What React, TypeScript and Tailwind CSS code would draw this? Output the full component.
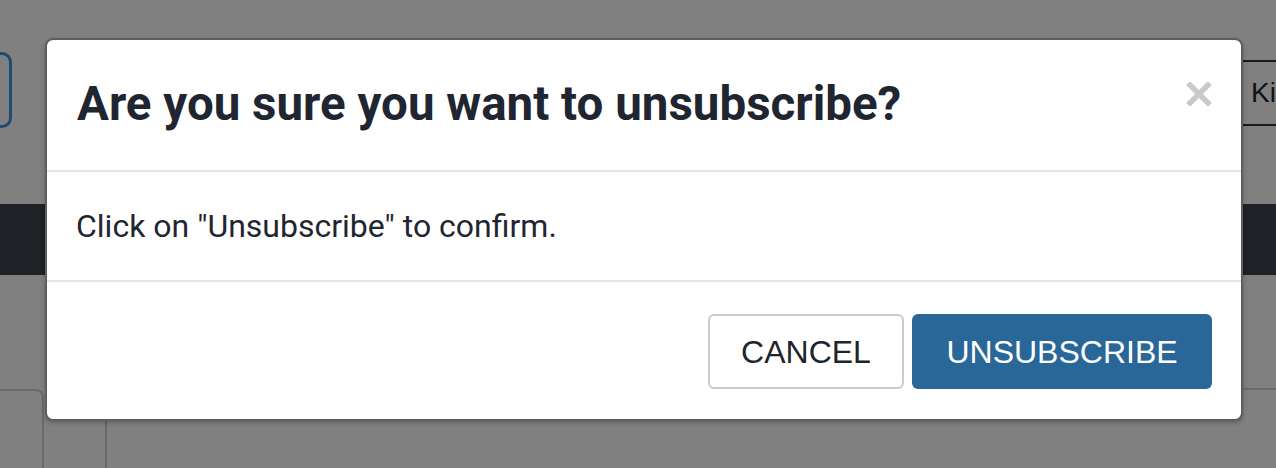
import React from "react";

function CloseIcon() {
	return (
		<svg width="26" height="24" viewBox="0 0 26 24" aria-hidden="true">
			<path
				d="M4 3 L22 21 M22 3 L4 21"
				stroke="#c9c9c9"
				strokeWidth="5.5"
				strokeLinecap="square"
				fill="none"
			/>
		</svg>
	);
}

function PageBehind() {
	return (
		<div className="flex flex-col">
			<div className="h-[204px] flex justify-between items-start">
				<div className="mt-[52px] ml-[-40px] h-[76px] w-[52px] rounded-[10px] border-[3px] border-[#1f4b70]" />
				<div className="mt-[60px] mr-[-45px] h-[66px] w-[80px] border-2 border-r-0 border-[#1a1a1a] flex items-center pl-[8px] text-[28px] text-[#111] font-['Liberation_Sans',sans-serif]">
					Ki
				</div>
			</div>
			<div className="h-[71px] bg-[#1e2125]" />
			<div className="flex items-start pt-[113px]">
				<div className="mt-[1px] h-[100px] w-[44px] rounded-tr-[8px] border-2 border-l-0 border-b-0 border-[#6a6a6a]" />
				<div className="ml-[61px] flex-1 h-[100px] border-l-2 border-t-2 border-[#6a6a6a]" />
			</div>
		</div>
	);
}

export default function App() {
	return (
		<div className="relative w-[1276px] h-[468px] overflow-hidden bg-[#808080] font-['Roboto',sans-serif]">
			<PageBehind />

			<div className="absolute left-[45px] top-[38px] w-[1198px] h-[383px] flex flex-col rounded-[8px] border-2 border-[#5e5e5e] bg-white shadow-[0_2px_4px_rgba(0,0,0,0.25)]">
				<div className="h-[132px] flex justify-between items-start px-[30px] border-b-2 border-[#e5e5e5]">
					<h4 className="mt-[36px] text-[47.5px] leading-[56px] font-bold text-[#1f2631]">
						Are you sure you want to unsubscribe?
					</h4>
					<button className="mt-[42px] mr-[-1px]" type="button">
						<CloseIcon />
					</button>
				</div>

				<div className="h-[110px] flex items-center pl-[29px] pr-[30px] border-b-2 border-[#e5e5e5]">
					<p className="text-[32px] leading-[48px] text-[#1f2631]">
						Click on "Unsubscribe" to confirm.
					</p>
				</div>

				<div className="flex-1 flex justify-end items-start gap-[8px] pt-[32px] pr-[29px] font-['Liberation_Sans',sans-serif]">
					<button
						type="button"
						className="h-[75px] w-[196px] rounded-[6px] border-2 border-[#cccccc] bg-white text-[32px] text-[#212529]"
					>
						CANCEL
					</button>
					<button
						type="button"
						className="h-[75px] w-[300px] rounded-[6px] bg-[#2a6799] text-[32px] text-white"
					>
						UNSUBSCRIBE
					</button>
				</div>
			</div>
		</div>
	);
}
